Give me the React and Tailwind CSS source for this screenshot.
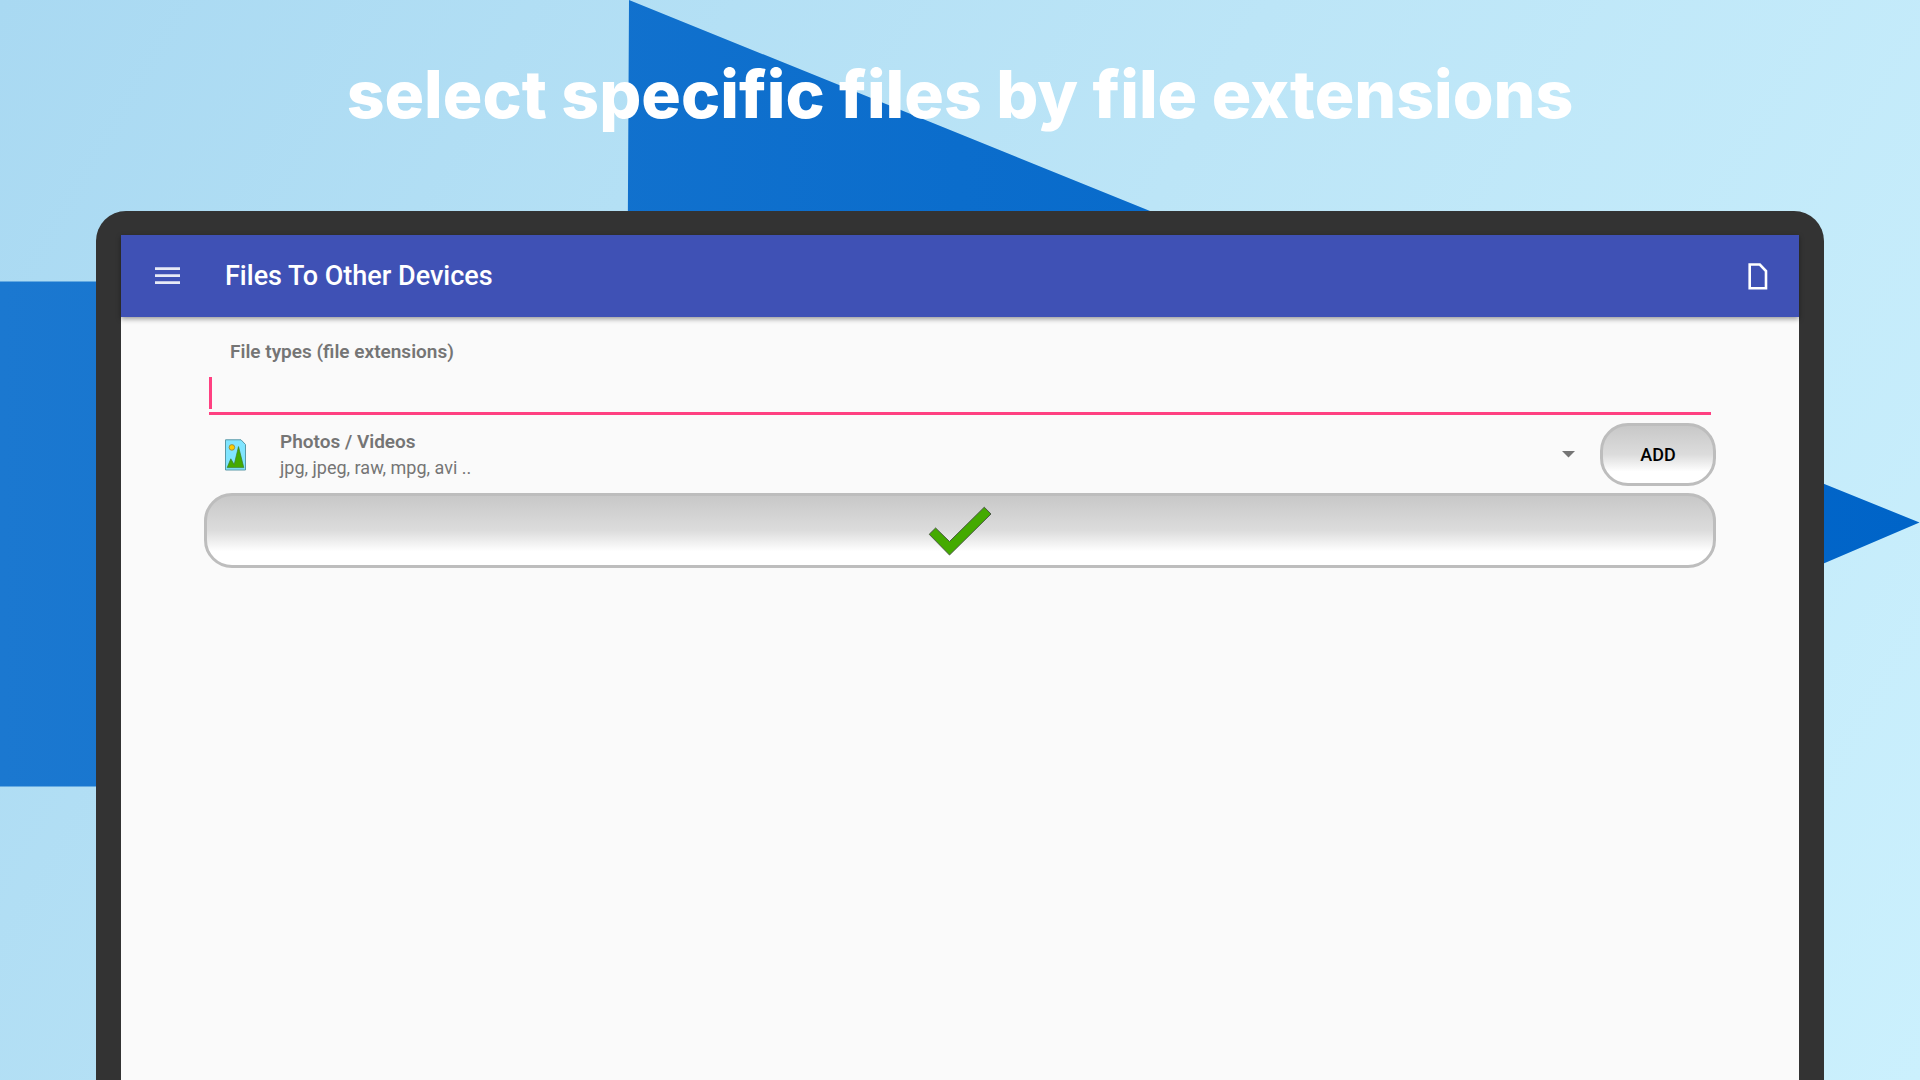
import React, { useState } from 'react';

const FILE_GROUPS = [
  { name: 'Photos / Videos', extensions: ['jpg', 'jpeg', 'raw', 'mpg', 'avi'] },
];

function BackgroundArrow() {
  return (
    <svg
      className="absolute inset-0 w-full h-full"
      viewBox="0 0 1920 1080"
      preserveAspectRatio="none"
      aria-hidden="true"
    >
      <defs>
        <linearGradient id="arrow" gradientUnits="userSpaceOnUse" x1="0" y1="0" x2="1920" y2="0">
          <stop offset="0" stopColor="#1b78d0" />
          <stop offset="0.5" stopColor="#0b6dcc" />
          <stop offset="1" stopColor="#0064c8" />
        </linearGradient>
      </defs>
      <path d="M0 281.5H627.5L629 0L1919.5 522.5L625 1076L626 786.5H0Z" fill="url(#arrow)" />
    </svg>
  );
}

function MenuIcon() {
  return (
    <svg className="w-[25px] h-[18px]" viewBox="0 0 25 18" fill="#fff" fillOpacity="0.88" aria-hidden="true">
      <path d="M0 0.3H25V3H0ZM0 7.3H25V10H0ZM0 14.3H25V17H0Z" />
    </svg>
  );
}

function FileIcon() {
  return (
    <svg className="w-5 h-[27px]" viewBox="0 0 20 27" fill="none" stroke="#fff" strokeWidth="2.6" aria-hidden="true">
      <path d="M1.7 1.5H11.8L18 8V25.2H1.7Z" />
    </svg>
  );
}

function PhotoIcon() {
  return (
    <svg className="w-[21px] h-8" viewBox="0 0 21 32" aria-hidden="true">
      <path d="M0.5 0.8H16L20.5 5.5V31H0.5Z" fill="#80e5ff" stroke="#5b98a6" />
      <circle cx="6.9" cy="8.4" r="2.8" fill="#ffcc00" stroke="#8a8443" strokeWidth="0.8" />
      <path d="M2.2 28.6L5.8 19.8L9.2 25.6L13.5 7.6L18.8 28.6Z" fill="#44aa00" stroke="#3d7d2b" strokeWidth="0.7" />
    </svg>
  );
}

function CheckIcon() {
  return (
    <svg className="w-16 h-[50px]" viewBox="0 0 64 50" aria-hidden="true">
      <path
        d="M1.2 28.3L7.6 22L21.5 35.5L56.3 1.2L63 8L21.5 49Z"
        fill="#44aa00"
        stroke="#4a5a44"
        strokeWidth="1"
      />
    </svg>
  );
}

export default function App() {
  const [value, setValue] = useState('');
  const [groupIndex, setGroupIndex] = useState(0);
  const group = FILE_GROUPS[groupIndex];

  const handleAdd = () => {
    const added = group.extensions.join(', ');
    setValue(value ? `${value}, ${added}` : added);
  };

  return (
    <div className="relative min-h-screen flex flex-col overflow-hidden bg-[linear-gradient(120deg,#a9d9f2_0%,#bce5f7_50%,#cbf0fd_100%)] font-[Roboto,sans-serif]">
      <BackgroundArrow />

      <h1 className="relative pt-[54px] h-[211px] text-center text-[66px] leading-[80px] font-extrabold text-white font-[Inter,sans-serif]">
        select specific files by file extensions
      </h1>

      {/* Tablet */}
      <div className="relative flex-1 flex flex-col mx-[5%] border-x-[25px] border-t-24 border-[#333333] rounded-t-[30px] bg-[#333333]">
        <header className="relative flex items-center h-[82px] pl-[34px] pr-[31px] bg-[#3f51b5] text-white shadow-[0_2px_5px_rgba(0,0,0,0.4)]">
          <button type="button" aria-label="Menu">
            <MenuIcon />
          </button>
          <h2 className="ml-[45px] flex-1 text-[27px] leading-[40px] font-medium">Files To Other Devices</h2>
          <button type="button" aria-label="New file">
            <FileIcon />
          </button>
        </header>

        <main className="flex-1 px-[83px] pt-5 bg-[#fafafa] text-[#757575]">
          <label htmlFor="extensions" className="block pl-[26px] text-[19px] leading-[30px] font-semibold">
            File types (file extensions)
          </label>

          <div className="relative mx-[5px] mt-1">
            <input
              id="extensions"
              type="text"
              value={value}
              onChange={(e) => setValue(e.target.value)}
              className="block w-full h-11 px-1 border-b-3 border-[#ff4081] text-xl text-black outline-none caret-transparent"
            />
            {!value && <span className="absolute left-0 top-[6px] w-[3px] h-8 bg-[#ff4081]" />}
          </div>

          <div className="flex items-center gap-[7px] mt-2">
            <div className="relative flex-1 flex items-center pl-[21px] pr-[18px]">
              <PhotoIcon />
              <div className="ml-[34px] pt-px flex-1 text-[19px] leading-[26px]">
                <p className="font-semibold">{group.name}</p>
                <p className="text-[18px]">{group.extensions.join(', ')} ..</p>
              </div>
              <svg className="w-[13px] h-[7px]" viewBox="0 0 13 7" fill="#757575" aria-hidden="true">
                <path d="M0 0H13L6.5 6.5Z" />
              </svg>
              <select
                aria-label="File group"
                value={groupIndex}
                onChange={(e) => setGroupIndex(Number(e.target.value))}
                className="absolute inset-0 w-full h-full opacity-0"
              >
                {FILE_GROUPS.map((g, i) => (
                  <option key={g.name} value={i}>{g.name}</option>
                ))}
              </select>
            </div>
            <button
              type="button"
              onClick={handleAdd}
              className="w-[116px] h-[63px] rounded-[28px] border-3 border-[#bdbdbd] bg-[linear-gradient(#c8c8c8,#dcdcdc_50%,#ffffff_80%)] text-lg font-medium text-black"
            >
              ADD
            </button>
          </div>

          <button
            type="button"
            aria-label="Confirm"
            className="mt-[7px] flex w-full h-[75px] items-center justify-center rounded-[28px] border-3 border-[#bdbdbd] bg-[linear-gradient(#c8c8c8,#dcdcdc_50%,#ffffff_80%)]"
          >
            <CheckIcon />
          </button>
        </main>
      </div>
    </div>
  );
}
